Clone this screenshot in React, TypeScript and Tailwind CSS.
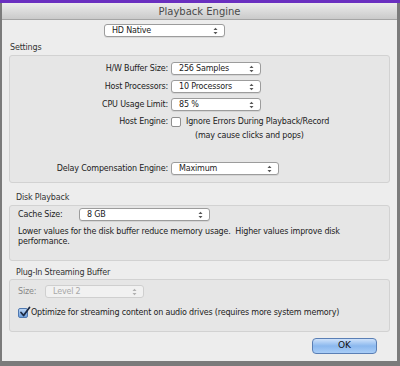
import React from 'react'

/* ── Small pieces ───────────────────────────────────────────────────── */

function Arrows({ dim }: { dim?: boolean }) {
  const c = dim ? '#b0b0b0' : '#555'
  return (
    <svg width="5" height="8" viewBox="0 0 5 8" className="shrink-0">
      <path d="M0.5 3 L2.5 0.8 L4.5 3 Z" fill={c} />
      <path d="M0.5 5 L2.5 7.2 L4.5 5 Z" fill={c} />
    </svg>
  )
}

function Popup({ value, width, dim }: { value: string; width: string; dim?: boolean }) {
  return (
    <div
      className={`flex h-[13px] items-center justify-between rounded-[3px] border pl-[7px] pr-[6px] ${width} ${
        dim ? 'border-[#cfcfcf] bg-[#f1f1f1] text-[#a8a8a8]' : 'border-[#9c9c9c] bg-white text-[#222] shadow-[0_1px_0_rgba(0,0,0,0.08)]'
      }`}
    >
      <span className="leading-none">{value}</span>
      <Arrows dim={dim} />
    </div>
  )
}

function Row({ label, children }: { label: string; children: React.ReactNode }) {
  return (
    <div className="flex items-center">
      <div className="w-[161px] pr-[3px] text-right">{label}</div>
      {children}
    </div>
  )
}

/* ── App ────────────────────────────────────────────────────────────── */

export default function App() {
  return (
    <div
      className="flex h-[366px] w-[400px] flex-col bg-[#7b7b7b] text-[8px] tracking-[-0.18px] text-[#222]"
      style={{ fontFamily: '"DejaVu Sans", Verdana, sans-serif' }}
    >
      <div className="h-[3px] shrink-0 bg-[#6a2fc0]" />
      <div className="ml-[2px] mr-[3px] flex h-[358px] flex-col bg-[#ededed]">
        {/* Title bar */}
        <div className="flex h-[17px] shrink-0 items-center justify-center border-b border-[#a5a5a5] bg-gradient-to-b from-[#ececec] to-[#cacaca] text-[10px] tracking-normal text-[#4a4a4a]">
          Playback Engine
        </div>

        <div className="flex pl-[102px] pt-[4px]">
          <Popup value="HD Native" width="w-[121px]" />
        </div>

        {/* Settings */}
        <div className="pl-[8px] pt-[5px] text-[#333]">Settings</div>
        <div className="mx-[7px] mt-[1px] flex h-[128px] flex-col rounded-[3px] border border-[#d2d2d2] bg-[#e6e6e6] pt-[6px]">
          <div className="flex flex-col gap-[5px]">
            <Row label="H/W Buffer Size:">
              <Popup value="256 Samples" width="w-[90px]" />
            </Row>
            <Row label="Host Processors:">
              <Popup value="10 Processors" width="w-[90px]" />
            </Row>
            <Row label="CPU Usage Limit:">
              <Popup value="85 %" width="w-[90px]" />
            </Row>
            <Row label="Host Engine:">
              <div className="flex items-center">
                <div className="mr-[5px] h-[10px] w-[10px] rounded-[2px] border border-[#8f8f8f] bg-white" />
                Ignore Errors During Playback/Record
              </div>
            </Row>
          </div>
          <div className="ml-[185px] mt-[2px]">(may cause clicks and pops)</div>
          <div className="mt-[20px]">
            <Row label="Delay Compensation Engine:">
              <Popup value="Maximum" width="w-[108px]" />
            </Row>
          </div>
        </div>

        {/* Disk Playback */}
        <div className="pl-[14px] pt-[9px] text-[#333]">Disk Playback</div>
        <div className="mx-[7px] mt-[1px] flex h-[56px] flex-col rounded-[3px] border border-[#d2d2d2] bg-[#e6e6e6] pl-[8px] pt-[2px]">
          <div className="flex items-center">
            <div className="w-[61px]">Cache Size:</div>
            <Popup value="8 GB" width="w-[131px]" />
          </div>
          <div className="mt-[6px] leading-[10px]">
            Lower values for the disk buffer reduce memory usage.&nbsp; Higher values improve disk
            <br />
            performance.
          </div>
        </div>

        {/* Plug-In Streaming Buffer */}
        <div className="pl-[14px] pt-[6px] text-[#333]">Plug-In Streaming Buffer</div>
        <div className="mx-[7px] flex h-[53px] flex-col rounded-[3px] border border-[#d2d2d2] bg-[#e6e6e6] pl-[8px] pt-[5px]">
          <div className="flex items-center">
            <div className="w-[27px] text-[#888]">Size:</div>
            <Popup value="Level 2" width="w-[99px]" dim />
          </div>
          <div className="mt-[9px] flex items-center">
            <div className="relative mr-[3px] h-[10px] w-[10px] rounded-[2px] border border-[#4f78b0] bg-gradient-to-b from-[#b9d3f3] to-[#6e9fdc]">
              <svg width="12" height="12" viewBox="0 0 12 12" className="absolute -top-[3px] left-0">
                <path d="M2 6.5 L4.6 9.5 L10.5 1.5" fill="none" stroke="#1c2a44" strokeWidth="1.8" strokeLinecap="round" strokeLinejoin="round" />
              </svg>
            </div>
            Optimize for streaming content on audio drives (requires more system memory)
          </div>
        </div>

        {/* Footer */}
        <div className="flex justify-end pr-[20px] pt-[6px]">
          <div className="flex h-[16px] w-[65px] items-center justify-center rounded-[4px] border border-[#5a7fb5] bg-gradient-to-b from-[#cfe2fa] via-[#8bb8ee] to-[#a9cdf7] text-[9px] tracking-normal text-[#111]">
            OK
          </div>
        </div>
      </div>
    </div>
  )
}
